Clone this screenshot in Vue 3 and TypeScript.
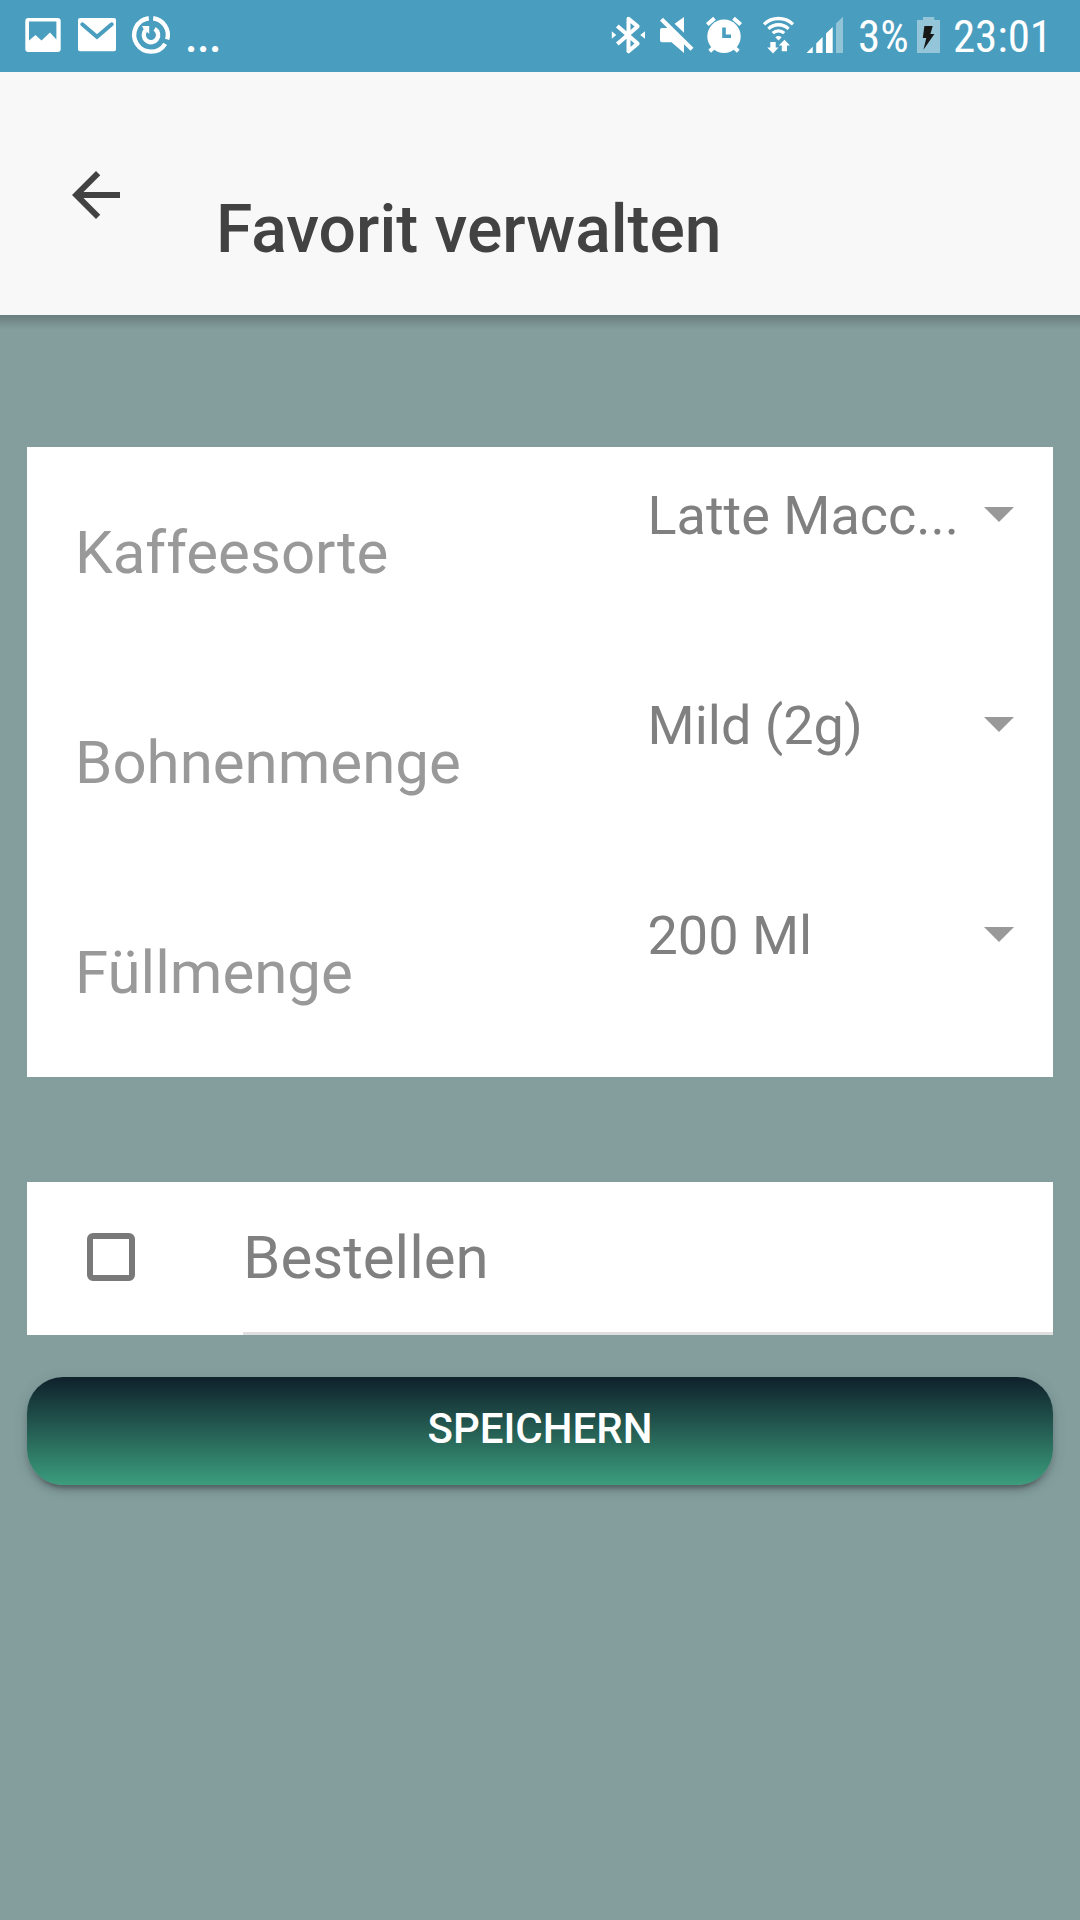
<script setup lang="ts">
import { ref } from 'vue'

interface Setting {
  label: string
  value: string
}

const settings: Setting[] = [
  { label: 'Kaffeesorte', value: 'Latte Macc...' },
  { label: 'Bohnenmenge', value: 'Mild (2g)' },
  { label: 'Füllmenge', value: '200 Ml' },
]
const order = ref(false)
</script>

<template>
  <div class="screen">
    <div class="status">
      <svg class="icon" width="69" height="72" viewBox="0 0 69 72">
        <path fill="#fff" fill-rule="evenodd" d="M28.3 18H57.7a3 3 0 0 1 3 3V49a3 3 0 0 1-3 3H28.3a3 3 0 0 1-3-3V21a3 3 0 0 1 3-3zM29 21.5V40.5L35.5 35L41.5 40.5L50 32.5L56.4 39.5V21.5z" />
      </svg>
      <svg class="icon" width="55" height="72" viewBox="69 0 55 72">
        <rect x="78" y="18" width="38" height="33.3" rx="2" fill="#fff" />
        <path d="M82.3 24.3L97 36.8L111.7 24.3" fill="none" stroke="#499dbe" stroke-width="4" stroke-linecap="round" />
      </svg>
      <svg class="icon" width="61" height="72" viewBox="124 0 61 72">
        <g fill="none" stroke="#fff">
          <path stroke-width="4.4" d="M153.2 18.2A16.8 16.8 0 0 1 167.2 39.4" />
          <path stroke-width="4.4" d="M165.2 43.8A16.8 16.8 0 1 1 148.8 18.2" />
          <path stroke-width="4.4" d="M154.6 28.8A7.2 7.2 0 1 1 145.4 30.4" />
        </g>
        <path d="M142 26H149.2V34L146.9 31.8L143.9 29.4z" fill="#fff" />
      </svg>
      <span class="more">...</span>
      <span class="spacer"></span>
      <svg class="icon" width="52" height="72" viewBox="600 0 52 72">
        <path d="M617.3 26L637.6 43.6L628.5 51.3V18.7L637.6 26.4L617.3 44" fill="none" stroke="#fff" stroke-width="4" stroke-linejoin="round" />
        <path d="M611.8 31.2L616.2 35L611.8 38.8zM645 31.2L640.2 35L645 38.8z" fill="#fff" />
      </svg>
      <svg class="icon" width="48" height="72" viewBox="652 0 48 72">
        <path fill="#fff" d="M674.6 23.8L684 17V32.8zM662 28H668L684 43.5V53L671.5 42.3H662a2 2 0 0 1-2-2V30a2 2 0 0 1 2-2z" />
        <path d="M661.5 19.3L692 49.3" stroke="#fff" stroke-width="4.2" />
      </svg>
      <svg class="icon" width="50" height="72" viewBox="700 0 50 72">
        <circle cx="724" cy="36.3" r="16.7" fill="#fff" />
        <path d="M707.3 24.6L714.5 18.3M733.5 18.3L740.7 24.6M709.7 51.3L714 47.3M738.3 51.3L734 47.3" stroke="#fff" stroke-width="4" />
        <path d="M724 27.5V36.3H731" fill="none" stroke="#499dbe" stroke-width="3.6" />
      </svg>
      <svg class="icon" width="50" height="72" viewBox="750 0 50 72">
        <path d="M764 24.4A20.8 20.8 0 0 1 793 24.4M768.4 28.9A14.4 14.4 0 0 1 788.6 28.9M772.8 33.2A8 8 0 0 1 784.2 33.2" fill="none" stroke="#fff" stroke-width="3.3" />
        <path fill="#fff" d="M775.3 37.3Q778.5 34.5 781.7 37.3L778.5 40.6zM770.3 42H775.7V47.6H778.6L773 53.4L767.2 47.6H770.3zM784.5 39.8L790 45.6H787V51.2H781.8V45.6H778.8z" />
      </svg>
      <svg class="icon" width="58" height="72" viewBox="800 0 58 72">
        <path fill="#fff" d="M806.5 53L812.7 46.8V53zM816.2 43.4L822.6 37V53H816.2zM826 33.6L832.7 27V53H826z" />
        <path fill="#92c4d8" d="M836 23.6L843 16.8V53H836z" />
      </svg>
      <span class="percent">3%</span>
      <svg class="icon" width="41" height="72" viewBox="912 0 41 72">
        <path fill="#94c5d8" d="M917 20H923V17H934.3V20H940V53H917z" />
        <path fill="#171717" d="M924.4 26H932.7L930.4 34H934.4L923.4 49.8L926.3 38H922.8z" />
      </svg>
      <span class="time">23:01</span>
    </div>

    <header class="toolbar">
      <svg class="back" width="72" height="72" viewBox="0 0 24 24">
        <path fill="#424242" d="M20 11H7.83l5.59-5.59L12 4l-8 8 8 8 1.41-1.41L7.83 13H20v-2z" />
      </svg>
      <h1 class="title">Favorit verwalten</h1>
    </header>

    <main class="content">
      <section class="card">
        <div v-for="s in settings" :key="s.label" class="row">
          <span class="label">{{ s.label }}</span>
          <span class="value">{{ s.value }}</span>
          <svg class="caret" width="30" height="15" viewBox="0 0 30 15"><path d="M0 0H30L15 15z" fill="#999" /></svg>
        </div>
      </section>

      <section class="card order" @click="order = !order">
        <span class="box"></span>
        <span class="order-label">Bestellen</span>
      </section>

      <button class="save" type="button">SPEICHERN</button>
    </main>
  </div>
</template>

<style>
body {
  background: #849e9e;
}
</style>

<style scoped>
.screen {
  width: 1080px;
  height: 1920px;
  overflow: hidden;
  display: flex;
  flex-direction: column;
  background: #849e9e;
  font-family: Roboto, "Liberation Sans", sans-serif;
}
.status {
  flex: none;
  height: 72px;
  display: flex;
  background: #499dbe;
  color: #fff;
  font-family: "Roboto Condensed", Roboto, sans-serif;
  font-stretch: 75%;
  font-size: 45px;
  line-height: 73px;
  white-space: nowrap;
}
.icon {
  flex: none;
  display: block;
}
.more {
  width: 40px;
  font-weight: 500;
  letter-spacing: -0.5px;
}
.spacer {
  flex: 1;
}
.percent {
  width: 54px;
}
.time {
  width: 127px;
  letter-spacing: -0.1px;
}
.toolbar {
  flex: none;
  height: 243px;
  display: flex;
  align-items: flex-start;
  background: #f8f8f8;
}
.back {
  flex: none;
  margin: 87px 84px 0 60px;
}
.title {
  margin: 118px 0 0;
  font-size: 66px;
  line-height: 80px;
  font-weight: 500;
  color: #424242;
  white-space: nowrap;
}
.content {
  flex: 1;
  display: flex;
  flex-direction: column;
  padding: 132px 27px 0;
  background: linear-gradient(rgba(0, 0, 0, 0.2), rgba(0, 0, 0, 0)) top / 100% 15px no-repeat;
}
.card {
  background: #fff;
}
.row {
  height: 210px;
  display: flex;
  align-items: flex-start;
  padding: 0 39px 0 48px;
  box-sizing: border-box;
}
.label {
  width: 572.5px;
  margin-top: 69px;
  font-size: 60px;
  line-height: 73px;
  color: #999;
}
.value {
  flex: 1;
  margin-top: 36px;
  font-size: 54px;
  line-height: 65px;
  color: #808080;
  white-space: nowrap;
}
.caret {
  flex: none;
  margin-top: 60px;
}
.order {
  height: 153px;
  margin-top: 105px;
  display: flex;
  align-items: flex-start;
}
.box {
  flex: none;
  width: 48px;
  height: 48px;
  box-sizing: border-box;
  margin: 51px 108px 0 60px;
  border: 6px solid #797979;
  border-radius: 6px;
}
.order-label {
  flex: 1;
  height: 153px;
  box-sizing: border-box;
  padding-top: 39px;
  border-bottom: 3px solid #dedede;
  font-size: 60px;
  line-height: 73px;
  color: #808080;
}
.save {
  height: 108px;
  margin: 42px 0 0;
  padding: 0 0 5px;
  border: 0;
  border-radius: 36px;
  background: linear-gradient(#0f202b, #3b9d7c);
  box-shadow: 0 6px 6px 0 rgba(0, 0, 0, 0.14), 0 9px 3px -6px rgba(0, 0, 0, 0.2), 0 3px 15px 0 rgba(0, 0, 0, 0.12);
  color: #fff;
  font-family: inherit;
  font-size: 42px;
  line-height: 103px;
  font-weight: 500;
}
</style>
